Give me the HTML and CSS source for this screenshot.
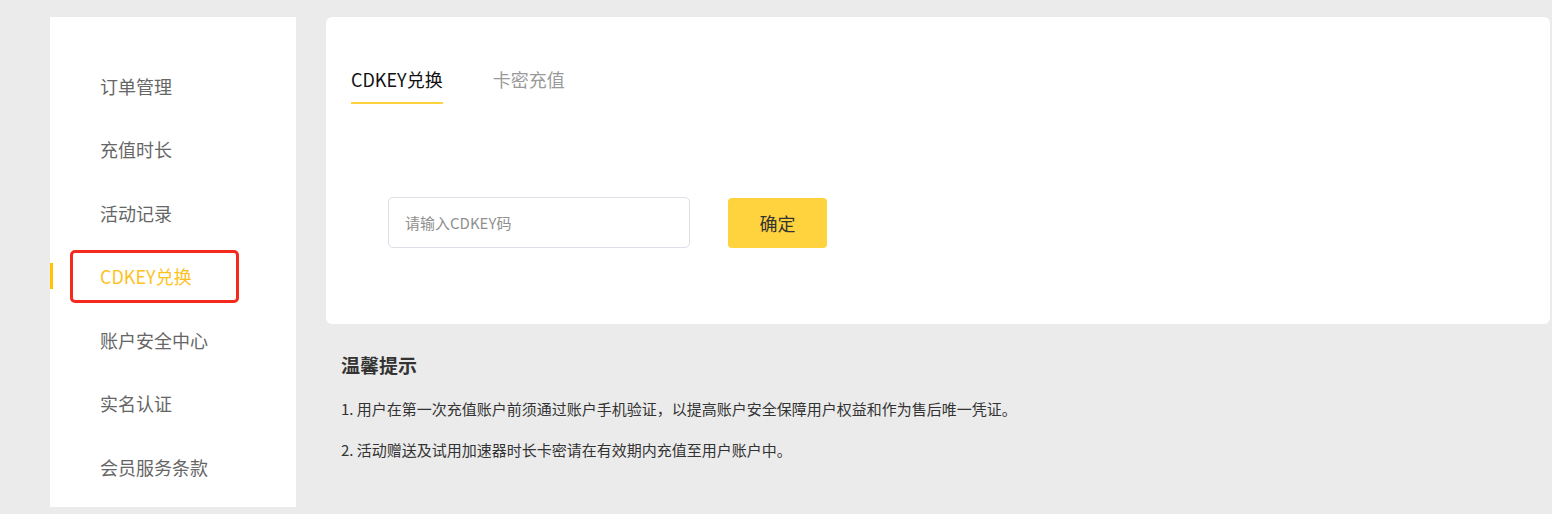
FILE: index.html
```html
<!DOCTYPE html>
<html lang="zh-CN">
<head>
<meta charset="utf-8">
<title>CDKEY兑换</title>
<link rel="stylesheet" href="styles.css">
</head>
<body>
<div class="page">
  <aside class="sidebar">
    <ul class="menu">
      <li class="menu-item">订单管理</li>
      <li class="menu-item">充值时长</li>
      <li class="menu-item">活动记录</li>
      <li class="menu-item active"><span class="menu-box">CDKEY兑换</span></li>
      <li class="menu-item">账户安全中心</li>
      <li class="menu-item">实名认证</li>
      <li class="menu-item">会员服务条款</li>
    </ul>
  </aside>
  <main class="main">
    <section class="card">
      <nav class="tabs">
        <span class="tab tab-active">CDKEY兑换</span>
        <span class="tab">卡密充值</span>
      </nav>
      <div class="form-row">
        <input class="code-input" type="text" placeholder="请输入CDKEY码">
        <button class="confirm-btn" type="button">确定</button>
      </div>
    </section>
    <section class="tips">
      <h2 class="tips-title">温馨提示</h2>
      <p class="tips-line">1. 用户在第一次充值账户前须通过账户手机验证，以提高账户安全保障用户权益和作为售后唯一凭证。</p>
      <p class="tips-line">2. 活动赠送及试用加速器时长卡密请在有效期内充值至用户账户中。</p>
    </section>
  </main>
</div>
</body>
</html>
```

FILE: styles.css
```css
* { box-sizing: border-box; }
html, body {
  margin: 0;
  padding: 0;
  background: #ebebeb;
  font-family: "Noto Sans CJK SC", "Noto Sans", sans-serif;
}
.page {
  display: flex;
  gap: 30px;
  padding: 17px 2px 0 50px;
  height: 514px;
}
.sidebar {
  width: 246px;
  height: 490px;
  flex: none;
  background: #fff;
}
.menu {
  list-style: none;
  margin: 0;
  padding: 37px 0 0 0;
}
.menu-item {
  position: relative;
  height: 63.5px;
  display: flex;
  align-items: center;
  padding-left: 50px;
  font-size: 18px;
  color: #666;
  line-height: 24px;
}
.menu-item.active {
  color: #fdc21f;
  padding-left: 20px;
}
.menu-item.active::before {
  content: "";
  position: absolute;
  left: 0;
  top: 50%;
  width: 3px;
  height: 26px;
  margin-top: -13px;
  background: #ffc300;
}
.menu-box {
  display: flex;
  align-items: center;
  width: 169px;
  height: 53px;
  padding-left: 27px;
  border: 3px solid #f52a1e;
  border-radius: 5px;
}
.main {
  flex: 1;
  display: flex;
  flex-direction: column;
}
.card {
  background: #fff;
  border-radius: 6px;
  height: 307px;
  padding: 50px 0 0 25px;
}
.tabs {
  display: flex;
  gap: 50px;
}
.tab {
  font-size: 18px;
  line-height: 24px;
  color: #999;
  padding-bottom: 11px;
}
.tab-active {
  color: #111;
  border-bottom: 2px solid #ffd33d;
}
.form-row {
  display: flex;
  align-items: center;
  margin-top: 93px;
  padding-left: 37px;
  gap: 38px;
}
.code-input {
  width: 302px;
  height: 51px;
  border: 1px solid #dcdfe6;
  border-radius: 5px;
  padding: 0 16px;
  font-family: inherit;
  font-size: 15px;
  color: #333;
  outline: none;
}
.code-input::placeholder { color: #8f8f8f; }
.confirm-btn {
  width: 99px;
  height: 50px;
  border: none;
  border-radius: 4px;
  background: #ffd33d;
  font-family: inherit;
  font-size: 18px;
  color: #333;
  cursor: pointer;
}
.tips {
  padding-left: 15px;
}
.tips-title {
  margin: 29px 0 0 0;
  font-size: 19px;
  line-height: 24px;
  font-weight: 700;
  color: #333;
}
.tips-line {
  margin: 22px 0 0 0;
  font-size: 15px;
  line-height: 20px;
  color: #333;
}
.tips-line + .tips-line { margin-top: 21px; }
```
